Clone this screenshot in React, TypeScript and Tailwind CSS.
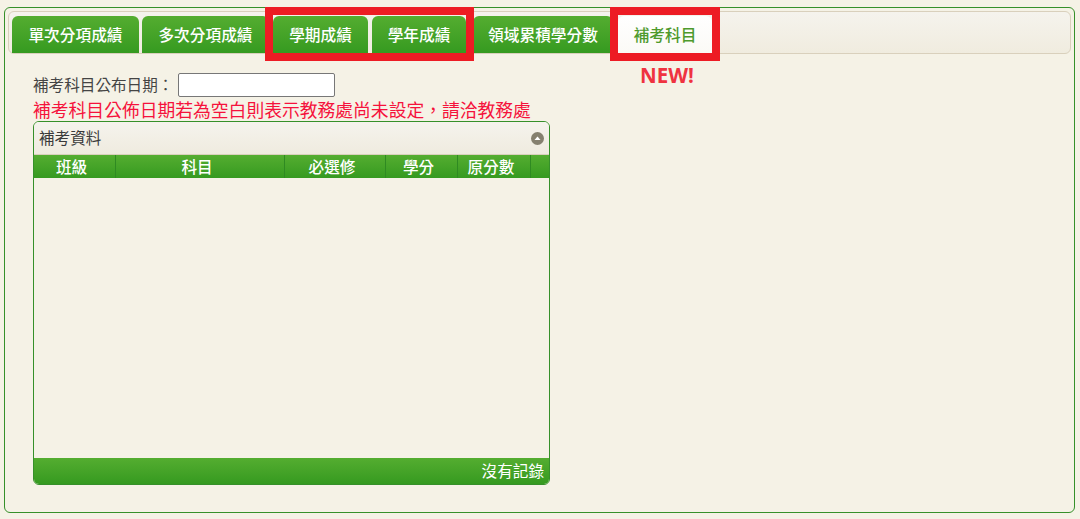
import React from 'react';

const font = { fontFamily: '"Noto Sans CJK TC", "Liberation Sans", sans-serif' };

const tabs = [
  { label: '單次分項成績', width: 'w-[127px]', margin: 'ml-0' },
  { label: '多次分項成績', width: 'w-[127px]', margin: 'ml-[3px]' },
  { label: '學期成績', width: 'w-[95px]', margin: 'ml-[4px]' },
  { label: '學年成績', width: 'w-[94px]', margin: 'ml-[4px]' },
  { label: '領域累積學分數', width: 'w-[140px]', margin: 'ml-[7px]' },
];

const columns = [
  { label: '班級', width: 'w-[82px]' },
  { label: '科目', width: 'w-[169px]' },
  { label: '必選修', width: 'w-[101px]' },
  { label: '學分', width: 'w-[72px]' },
  { label: '原分數', width: 'w-[73px]' },
];

const green = 'bg-gradient-to-b from-[#54ad30] to-[#359a20]';

export default function App() {
  return (
    <div style={font} className="relative h-[519px] w-[1080px] overflow-hidden bg-[#f5f2e6] pt-[7px] pl-[4px]">
      <div className="h-[506px] w-[1071px] rounded-[6px] border border-[#36902a] pt-[3px] pl-[3px]">
        {/* tab bar */}
        <div className="flex h-[43px] w-[1063px] items-end rounded-[6px] border border-[#d9d0bc] bg-gradient-to-b from-[#f5f3ed] to-[#f0ecdf] pl-[3px]">
          {tabs.map((tab) => (
            <div
              key={tab.label}
              className={`${tab.width} ${tab.margin} flex h-[37px] items-center justify-center rounded-t-[6px] ${green} text-[15.7px] font-medium text-white`}
            >
              {tab.label}
            </div>
          ))}
          <div className="ml-[5px] flex h-[37px] w-[94px] items-center justify-center rounded-t-[6px] bg-gradient-to-b from-white to-[#fbfaf6] text-[15.7px] font-medium text-[#4d9a2c]">
            補考科目
          </div>
        </div>

        {/* form */}
        <div className="pl-[25px] pt-[19px]">
          <div className="flex h-[24px] items-center text-[15.6px] text-[#444]">
            <span className="w-[145px] whitespace-nowrap pb-[1px]">補考科目公布日期：</span>
            <div className="h-[24px] w-[157px] rounded-[2px] border border-[#777] bg-white" />
          </div>
          <div className="h-[24px] whitespace-nowrap text-[17.8px] leading-[24px] text-[#f5123c]">
            補考科目公佈日期若為空白則表示教務處尚未設定，請洽教務處
          </div>

          {/* grid panel */}
          <div className="flex h-[364px] w-[517px] flex-col overflow-hidden rounded-[6px] border border-[#36902a]">
            <div className="flex h-[33px] shrink-0 items-center justify-between border-b border-[#d9d0bc] bg-gradient-to-b from-[#f5f3ed] to-[#efebdf] pl-[5px] pr-[5px] text-[15.6px] text-[#3a3a3a]">
              <span>補考資料</span>
              <svg width="13" height="13" viewBox="0 0 13 13">
                <circle cx="6.5" cy="6.5" r="6.5" fill="#85806f" />
                <path d="M3.5 8 L6.5 4.5 L9.5 8 Z" fill="#fff" />
              </svg>
            </div>
            <div className={`flex h-[23px] shrink-0 ${green} text-[15.6px] font-medium text-white`}>
              {columns.map((col) => (
                <div key={col.label} className={`${col.width} flex items-center justify-center border-r border-[#2f8a22] pr-[6px]`}>
                  {col.label}
                </div>
              ))}
            </div>
            <div className="flex-1" />
            <div className={`flex h-[26px] shrink-0 items-center justify-end ${green} pr-[5px] text-[15.6px] text-white`}>
              沒有記錄
            </div>
          </div>
        </div>
      </div>

      {/* red callouts drawn over the screenshot */}
      <div className="absolute left-[265px] top-[7px] h-[54px] w-[209px] border-[8px] border-[#ed1c24]" />
      <div className="absolute left-[610px] top-[7px] h-[54px] w-[110px] border-[8px] border-[#ed1c24]" />
      <div className="absolute left-[640px] top-[63px] text-[20.5px] font-bold leading-[24px] text-[#ef3340]" style={{ fontFamily: '"Open Sans", sans-serif' }}>
        NEW!
      </div>
    </div>
  );
}
